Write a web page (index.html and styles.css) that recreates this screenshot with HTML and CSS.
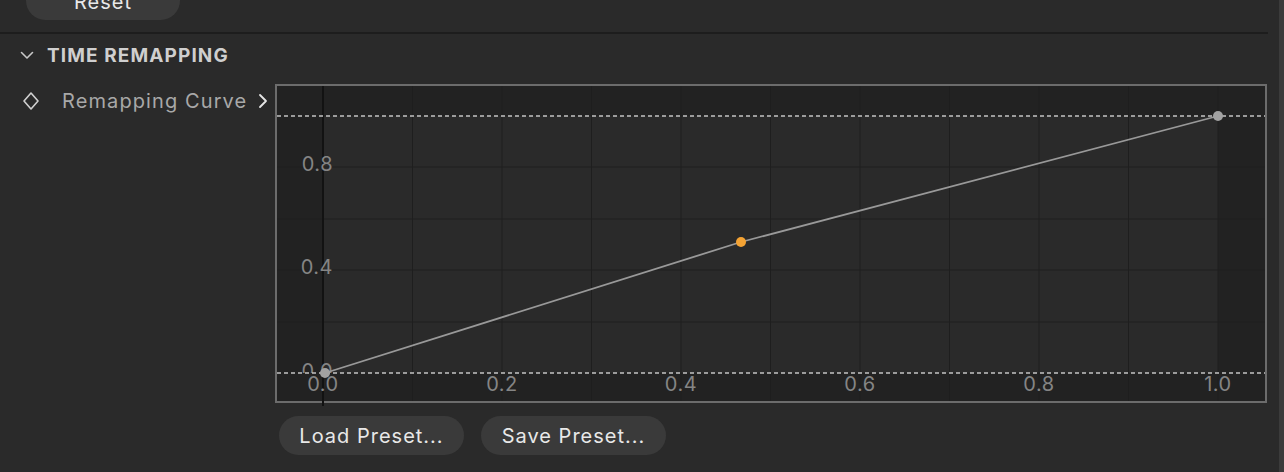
FILE: index.html
```html
<!DOCTYPE html>
<html lang="en">
<head>
    <meta charset="UTF-8">
    <title>Time Remapping</title>
    <link rel="stylesheet" href="styles.css">
</head>
<body>
    <div class="panel">
        <div class="content">
            <div class="top">
                <button class="pill reset">Reset</button>
            </div>
            <div class="section-header">
                <svg class="chevron-down" width="14" height="9" viewBox="0 0 14 9">
                    <path d="M1.5 1.5 L7 7 L12.5 1.5" fill="none" stroke="#c8c8c8" stroke-width="1.6" stroke-linecap="round" stroke-linejoin="round"/>
                </svg>
                <span class="section-title">TIME REMAPPING</span>
            </div>
            <div class="curve-row">
                <div class="curve-label">
                    <svg class="keyframe" width="18" height="20" viewBox="0 0 18 20">
                        <path d="M9 2 L16 10 L9 18 L2 10 Z" fill="none" stroke="#d0d0d0" stroke-width="1.6" stroke-linejoin="round"/>
                    </svg>
                    <span class="label-text">Remapping Curve</span>
                    <svg class="chevron-right" width="10" height="16" viewBox="0 0 10 16">
                        <path d="M2 2 L8 8 L2 14" fill="none" stroke="#e6e6e6" stroke-width="1.8" stroke-linecap="round" stroke-linejoin="round"/>
                    </svg>
                </div>
                <div class="graph">
                    <svg class="plot" width="988" height="315" viewBox="0 0 988 315">
                        <defs>
                            <clipPath id="above-axis">
                                <rect x="0" y="0" width="988" height="287"/>
                            </clipPath>
                        </defs>
                        <rect x="0" y="0" width="988" height="315" fill="#222222"/>
                        <rect x="46" y="30" width="895" height="257" fill="#2a2a2a"/>
                        <g stroke="#1e1e1e" stroke-width="1">
                            <line x1="0" y1="81" x2="988" y2="81"/>
                            <line x1="0" y1="133" x2="988" y2="133"/>
                            <line x1="0" y1="184" x2="988" y2="184"/>
                            <line x1="0" y1="236" x2="988" y2="236"/>
                            <line x1="135.5" y1="0" x2="135.5" y2="315"/>
                            <line x1="225" y1="0" x2="225" y2="315"/>
                            <line x1="314.5" y1="0" x2="314.5" y2="315"/>
                            <line x1="404" y1="0" x2="404" y2="315"/>
                            <line x1="493.5" y1="0" x2="493.5" y2="315"/>
                            <line x1="583" y1="0" x2="583" y2="315"/>
                            <line x1="672.5" y1="0" x2="672.5" y2="315"/>
                            <line x1="762" y1="0" x2="762" y2="315"/>
                            <line x1="851.5" y1="0" x2="851.5" y2="315"/>
                            <line x1="941" y1="0" x2="941" y2="315"/>
                        </g>
                        <line x1="46" y1="0" x2="46" y2="320" stroke="#121212" stroke-width="2"/>
                        <g class="tick" text-anchor="end" clip-path="url(#above-axis)">
                            <text x="56" y="85">0.8</text>
                            <text x="56" y="188">0.4</text>
                            <text x="56" y="292">0.0</text>
                        </g>
                        <g class="tick" text-anchor="middle">
                            <text x="46" y="305">0.0</text>
                            <text x="225" y="305">0.2</text>
                            <text x="404" y="305">0.4</text>
                            <text x="583" y="305">0.6</text>
                            <text x="762" y="305">0.8</text>
                            <text x="941" y="305">1.0</text>
                        </g>
                        <g stroke="#c4c4c4" stroke-width="1.6" stroke-dasharray="4 3">
                            <line x1="0" y1="30" x2="988" y2="30"/>
                            <line x1="0" y1="287" x2="988" y2="287"/>
                        </g>
                        <polyline points="48,287 464,156 941,30" fill="none" stroke="#999999" stroke-width="1.8"/>
                        <circle cx="48" cy="287" r="5" fill="#a2a2a2"/>
                        <circle cx="464" cy="156" r="5" fill="#f4a334"/>
                        <circle cx="941" cy="30" r="5" fill="#a2a2a2"/>
                    </svg>
                </div>
            </div>
            <div class="presets">
                <button class="pill preset">Load Preset...</button>
                <button class="pill preset">Save Preset...</button>
            </div>
        </div>
        <div class="scroll-track"></div>
    </div>
</body>
</html>
```

FILE: styles.css
```css
body {
    margin: 0;
    width: 1284px;
    height: 472px;
    overflow: hidden;
    background-color: #2a2a2a;
    font-family: 'Inter', 'Noto Sans', sans-serif;
    color: #e6e6e6;
}
.panel {
    display: flex;
    height: 472px;
}
.content {
    flex: 1;
    padding-right: 11px;
}
.scroll-track {
    width: 5px;
    background-color: #3b3b3b;
}
.top {
    display: flow-root;
    height: 32px;
    border-bottom: 2px solid #1d1d1d;
}
.pill {
    display: block;
    height: 39px;
    border: none;
    border-radius: 20px;
    background-color: #3a3a3a;
    color: #e8e8e8;
    font-family: inherit;
    font-size: 20px;
    letter-spacing: 1px;
    padding: 0;
}
.reset {
    width: 154px;
    margin-left: 26px;
    margin-top: -19px;
    padding-top: 3px;
}
.section-header {
    display: flex;
    align-items: center;
    height: 42px;
    padding-left: 20px;
    gap: 13px;
}
.section-title {
    font-size: 19px;
    font-weight: 700;
    letter-spacing: 1.1px;
    color: #cfcfcf;
}
.curve-row {
    display: flex;
    margin-top: 8px;
}
.curve-label {
    width: 275px;
    height: 34px;
    display: flex;
    align-items: center;
}
.keyframe {
    margin-left: 22px;
}
.label-text {
    margin-left: 22px;
    width: 196px;
    font-size: 20px;
    letter-spacing: 1.1px;
    color: #a8a8a8;
    white-space: nowrap;
}
.graph {
    width: 992px;
    height: 319px;
    box-sizing: border-box;
    border: 2px solid #6c6c6c;
}
.plot {
    display: block;
    overflow: visible;
}
.tick text {
    font-family: 'Inter', 'Noto Sans', sans-serif;
    font-size: 20px;
    letter-spacing: 0.5px;
    fill: #858585;
}
.presets {
    display: flex;
    gap: 17px;
    margin-left: 279px;
    margin-top: 13px;
}
.preset {
    width: 185px;
}
```
